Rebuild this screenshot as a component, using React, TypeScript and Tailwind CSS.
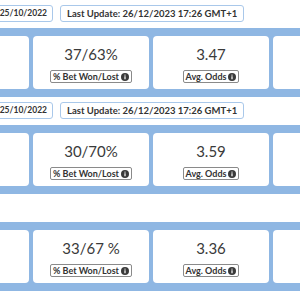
import React from "react";

const Info = () => (
  <svg width="8" height="8" viewBox="0 0 16 16" className="ml-[2px] shrink-0">
    <circle cx="8" cy="8" r="8" fill="#3a3a3a" />
    <rect x="6.8" y="6.5" width="2.4" height="6" fill="#fff" />
    <circle cx="8" cy="4.2" r="1.4" fill="#fff" />
  </svg>
);

type Card = { value: string; label: string };

const Label = ({ text }: { text: string }) => (
  <span className="inline-flex items-center h-[13px] px-[2px] border border-[#8a8a8a] rounded-[2px] text-[9px] font-bold leading-none text-[#333] whitespace-nowrap">
    {text}
    <Info />
  </span>
);

const StatCard = ({ c }: { c: Card }) => (
  <div className="w-[116px] h-[53px] shrink-0 bg-white rounded-[4px] flex flex-col items-center pt-[9px]">
    <div className="text-[15px] leading-[18px] text-[#3a3a3a] whitespace-nowrap">{c.value}</div>
    <div className="mt-[7px] flex">
      <Label text={c.label} />
    </div>
  </div>
);

const Badge = ({ text, small }: { text: string; small?: boolean }) => (
  <div
    className={
      small
        ? "h-[17px] flex items-center pl-[6px] pr-[5px] bg-white border border-[#a9c8ea] rounded-[3px] text-[8.5px] font-bold text-[#333] whitespace-nowrap leading-none"
        : "h-[17px] flex items-center px-[6px] bg-white border border-[#a9c8ea] rounded-[3px] text-[9.5px] font-bold text-[#333] whitespace-nowrap leading-none"
    }
  >
    {text}
  </div>
);

const Section = ({ cards, badges }: { cards: Card[]; badges: boolean }) => (
  <div className="pt-[5px]">
    <div className="h-[17px] flex gap-[7px]">
      {badges && (
        <>
          <div className="w-[149px] flex justify-end">
            <Badge text="Start Date: 25/10/2022" small />
          </div>
          <Badge text="Last Update: 26/12/2023 17:26 GMT+1" />
        </>
      )}
    </div>
    <div className="mt-[6px] bg-[#8fb7e3] py-[8px] pl-[9px] flex gap-[4px]">
      {cards.map((c, i) => (
        <StatCard key={i} c={c} />
      ))}
    </div>
  </div>
);

export default function App() {
  const sections: { cards: Card[]; badges: boolean }[] = [
    {
      badges: true,
      cards: [
        { value: "+12.4", label: "Profit" },
        { value: "37/63%", label: "% Bet Won/Lost" },
        { value: "3.47", label: "Avg. Odds" },
        { value: "145", label: "Bets" },
      ],
    },
    {
      badges: true,
      cards: [
        { value: "+8.1", label: "Profit" },
        { value: "30/70%", label: "% Bet Won/Lost" },
        { value: "3.59", label: "Avg. Odds" },
        { value: "98", label: "Bets" },
      ],
    },
    {
      badges: false,
      cards: [
        { value: "+5.2", label: "Profit" },
        { value: "33/67 %", label: "% Bet Won/Lost" },
        { value: "3.36", label: "Avg. Odds" },
        { value: "76", label: "Bets" },
      ],
    },
  ];
  return (
    <div className="w-[300px] h-[300px] overflow-hidden bg-white" style={{ fontFamily: "Lato, 'Noto Sans', sans-serif" }}>
      <div className="ml-[-96px] w-[520px]">
        {sections.map((s, i) => (
          <Section key={i} cards={s.cards} badges={s.badges} />
        ))}
      </div>
    </div>
  );
}
